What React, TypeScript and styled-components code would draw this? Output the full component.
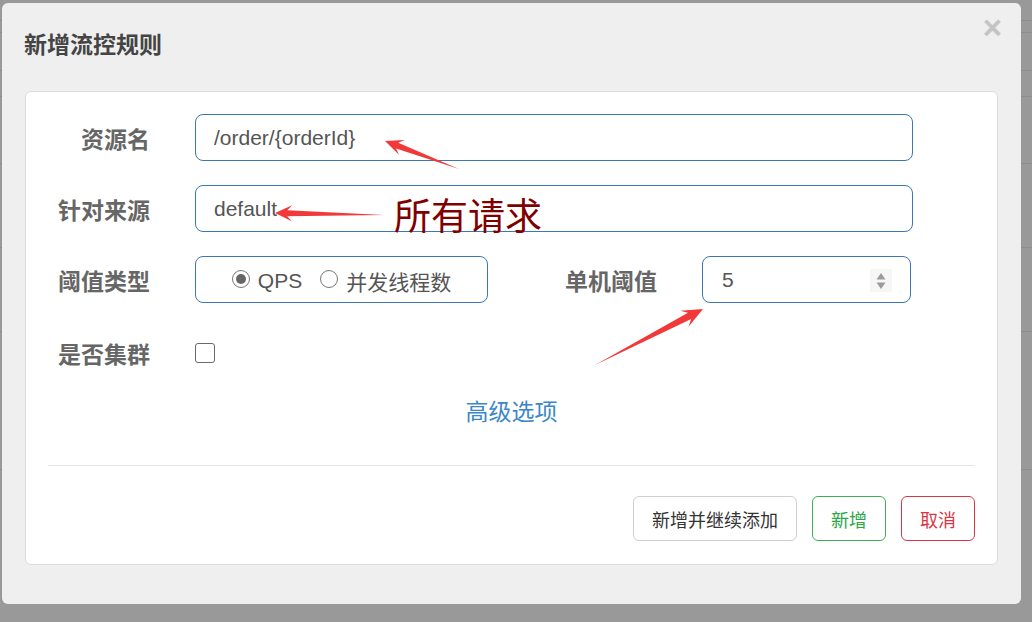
import styled, { createGlobalStyle } from 'styled-components';

const GlobalStyle = createGlobalStyle`
  html, body {
    margin: 0;
    padding: 0;
  }
  body {
    background: #999;
    font-family: "Liberation Sans", "Noto Sans CJK SC", sans-serif;
    overflow: hidden;
  }
  * {
    box-sizing: border-box;
  }
`;

const Page = styled.div`
  position: relative;
  width: 1032px;
  height: 622px;
  overflow: hidden;
  background: #999;
`;

const BackdropRow = styled.div<{ h: number }>`
  height: ${props => props.h}px;
  border-bottom: 1px solid #8d8d8d;
`;

const Modal = styled.div`
  position: absolute;
  left: 2px;
  top: 3px;
  width: 1019px;
  height: 601px;
  background: #efefef;
  border-radius: 6px;
  display: flex;
  flex-direction: column;
`;

const Header = styled.div`
  height: 80px;
  padding: 0 19px 0 22px;
  display: flex;
  align-items: center;
  justify-content: space-between;
`;

const Title = styled.h4`
  margin: 0;
  font-size: 23px;
  font-weight: bold;
  color: #444;
  font-family: "Noto Sans CJK SC", sans-serif;
`;

const Close = styled.span`
  align-self: flex-start;
  margin-top: 8px;
  font-size: 33px;
  line-height: 1;
  font-weight: bold;
  color: #c4c4c4;
  cursor: pointer;
`;

const Panel = styled.div`
  margin: 8px 23px 0;
  background: #fff;
  border: 1px solid #dcdcdc;
  border-radius: 6px;
  padding: 22px 22px 23px;
`;

const Form = styled.div`
  display: flex;
  flex-direction: column;
  gap: 24px;
`;

const FormRow = styled.div<{ h?: number }>`
  display: flex;
  align-items: center;
  gap: 45px;
  height: ${props => props.h || 47}px;
`;

const Label = styled.label<{ w: number }>`
  width: ${props => props.w}px;
  flex-shrink: 0;
  text-align: right;
  font-size: 23px;
  font-weight: bold;
  color: #666;
  font-family: "Noto Sans CJK SC", sans-serif;
`;

const TextInput = styled.input`
  width: 718px;
  height: 47px;
  border: 1px solid #3a77b5;
  border-radius: 8px;
  padding: 0 18px;
  font-size: 21px;
  color: #555;
  font-family: "Liberation Sans", "Noto Sans CJK SC", sans-serif;
  outline: none;
  background: #fff;
`;

const RadioBox = styled.div`
  width: 293px;
  height: 47px;
  border: 1px solid #3a77b5;
  border-radius: 8px;
  display: flex;
  align-items: center;
  justify-content: center;
  gap: 18px;
  padding-top: 2px;
`;

const RadioOption = styled.span`
  display: flex;
  align-items: center;
  gap: 8px;
  font-size: 21px;
  color: #555;
`;

const RadioCircle = styled.span<{ checked?: boolean }>`
  width: 18px;
  height: 18px;
  border-radius: 50%;
  border: 1.5px solid #777;
  display: flex;
  align-items: center;
  justify-content: center;
  margin-top: -4px;

  &::after {
    content: '';
    width: 10px;
    height: 10px;
    border-radius: 50%;
    background: ${props => (props.checked ? '#666' : 'transparent')};
  }
`;

const NumberBox = styled.div`
  width: 209px;
  height: 47px;
  border: 1px solid #3a77b5;
  border-radius: 8px;
  padding: 0 18px 0 19px;
  display: flex;
  align-items: center;
  justify-content: space-between;
  font-size: 21px;
  color: #555;
`;

const Spinner = styled.span`
  width: 22px;
  height: 23px;
  background: #f6f6f6;
  display: flex;
  align-items: center;
  justify-content: center;
  margin-top: 2px;
`;

const CheckBox = styled.span`
  width: 20px;
  height: 20px;
  border: 1.5px solid #6a6a6a;
  border-radius: 3px;
`;

const AdvancedLink = styled.a`
  display: block;
  margin-top: 16px;
  text-align: center;
  line-height: 30px;
  font-size: 23px;
  color: #3b87c8;
  text-decoration: none;
  font-family: "Noto Sans CJK SC", sans-serif;
  cursor: pointer;
`;

const Divider = styled.div`
  margin-top: 40px;
  height: 1px;
  background: #e5e5e5;
`;

const ButtonBar = styled.div`
  margin-top: 30px;
  display: flex;
  justify-content: flex-end;
  gap: 15px;
`;

const buttonColors = {
  default: { border: '#cfcfcf', text: '#333' },
  success: { border: '#3fae55', text: '#28a745' },
  danger: { border: '#dc3545', text: '#dc3545' }
};

const Button = styled.button<{ variant: keyof typeof buttonColors }>`
  height: 45px;
  padding: 0 18px;
  background: #fff;
  border: 1px solid ${props => buttonColors[props.variant].border};
  color: ${props => buttonColors[props.variant].text};
  border-radius: 6px;
  font-size: 18px;
  font-family: "Noto Sans CJK SC", sans-serif;
  cursor: pointer;
`;

const Annotations = styled.svg`
  position: absolute;
  left: 0;
  top: 0;
  pointer-events: none;
`;

const Note = styled.div`
  position: absolute;
  left: 394px;
  top: 196px;
  font-size: 37px;
  line-height: 1;
  color: #800000;
  font-family: "Noto Sans CJK SC", sans-serif;
  pointer-events: none;
`;

const arrowPoints = (tx: number, ty: number, hx: number, hy: number, headLen: number, headHalf: number, shaft: number) => {
  const dx = hx - tx;
  const dy = hy - ty;
  const len = Math.hypot(dx, dy);
  const ux = dx / len;
  const uy = dy / len;
  const nx = -uy;
  const ny = ux;
  const jx = hx - ux * headLen * 0.72;
  const jy = hy - uy * headLen * 0.72;
  const wx = hx - ux * headLen;
  const wy = hy - uy * headLen;
  const pts = [
    [tx, ty],
    [jx + (nx * shaft) / 2, jy + (ny * shaft) / 2],
    [wx + nx * headHalf, wy + ny * headHalf],
    [hx, hy],
    [wx - nx * headHalf, wy - ny * headHalf],
    [jx - (nx * shaft) / 2, jy - (ny * shaft) / 2]
  ];
  return pts.map(p => p.join(',')).join(' ');
};

const arrows = [
  { tail: [459, 169], tip: [385, 141], head: 18, half: 8, shaft: 6 },
  { tail: [384, 215], tip: [275, 213], head: 17, half: 8, shaft: 6 },
  { tail: [595, 365], tip: [703, 309], head: 21, half: 9, shaft: 7 }
];

const backdropRows = [21, 12, 38, 26, 67, 84, 84, 138];

export default function App() {
  return (
    <Page>
      <GlobalStyle />
      {backdropRows.map((h, i) => (
        <BackdropRow key={i} h={h} />
      ))}
      <Modal>
        <Header>
          <Title>新增流控规则</Title>
          <Close>×</Close>
        </Header>
        <Panel>
          <Form>
            <FormRow>
              <Label w={102}>资源名</Label>
              <TextInput readOnly value="/order/{orderId}" />
            </FormRow>
            <FormRow>
              <Label w={102}>针对来源</Label>
              <TextInput readOnly value="default" />
            </FormRow>
            <FormRow>
              <Label w={102}>阈值类型</Label>
              <RadioBox>
                <RadioOption>
                  <RadioCircle checked />
                  QPS
                </RadioOption>
                <RadioOption>
                  <RadioCircle />
                  并发线程数
                </RadioOption>
              </RadioBox>
              <Label w={124}>单机阈值</Label>
              <NumberBox>
                5
                <Spinner>
                  <svg width="10" height="18" viewBox="0 0 10 18">
                    <path d="M5 1 L9.5 7.5 L0.5 7.5 Z" fill="#9b9b9b" />
                    <path d="M5 17 L9.5 10.5 L0.5 10.5 Z" fill="#9b9b9b" />
                  </svg>
                </Spinner>
              </NumberBox>
            </FormRow>
            <FormRow h={52}>
              <Label w={102}>是否集群</Label>
              <CheckBox />
            </FormRow>
          </Form>
          <AdvancedLink>高级选项</AdvancedLink>
          <Divider />
          <ButtonBar>
            <Button variant="default">新增并继续添加</Button>
            <Button variant="success">新增</Button>
            <Button variant="danger">取消</Button>
          </ButtonBar>
        </Panel>
      </Modal>
      <Note>所有请求</Note>
      <Annotations width="1032" height="622" viewBox="0 0 1032 622">
        {arrows.map((a, i) => (
          <polygon
            key={i}
            points={arrowPoints(a.tail[0], a.tail[1], a.tip[0], a.tip[1], a.head, a.half, a.shaft)}
            fill="#f2393a"
          />
        ))}
      </Annotations>
    </Page>
  );
}
